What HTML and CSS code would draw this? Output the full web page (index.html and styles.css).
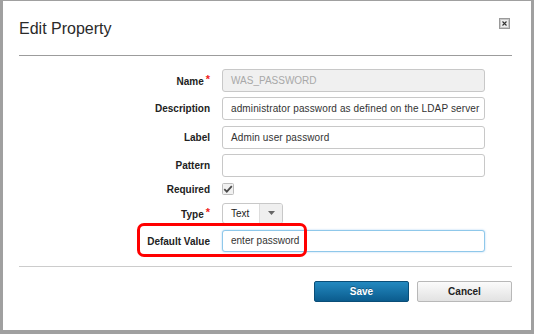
FILE: index.html
```html
<!DOCTYPE html>
<html>
<head>
<meta charset="utf-8">
<link rel="stylesheet" href="styles.css">
</head>
<body>
<div class="dialog">
  <div class="header">
    <div class="title">Edit Property</div>
    <svg class="close" width="11" height="11" viewBox="0 0 11 11">
      <rect x="0.5" y="0.5" width="10" height="10" fill="#e4e4e4" stroke="#9a9a9a"/>
      <rect x="1.5" y="1.5" width="8" height="8" fill="#eeeeee" stroke="#c8c8c8"/>
      <path d="M3.5 3.5 L7.5 7.5 M7.5 3.5 L3.5 7.5" stroke="#333" stroke-width="1.1"/>
    </svg>
  </div>
  <div class="form">
    <div class="row">
      <div class="label">Name<span class="req">*</span></div>
      <div class="field disabled">WAS_PASSWORD</div>
    </div>
    <div class="row">
      <div class="label">Description</div>
      <div class="field">administrator password as defined on the LDAP server</div>
    </div>
    <div class="row row-label">
      <div class="label">Label</div>
      <div class="field">Admin user password</div>
    </div>
    <div class="row">
      <div class="label">Pattern</div>
      <div class="field"></div>
    </div>
    <div class="row row-check">
      <div class="label">Required</div>
      <svg class="checkbox" width="12" height="12" viewBox="0 0 12 12">
        <rect x="0.5" y="0.5" width="11" height="11" rx="1" fill="#f1f1f1" stroke="#bdbdbd"/>
        <path d="M2.3 6.2 L4.8 8.6 L9.8 3.2" fill="none" stroke="#4a4a4a" stroke-width="1.8"/>
      </svg>
    </div>
    <div class="row row-type">
      <div class="label">Type<span class="req">*</span></div>
      <div class="select">
        <span class="select-text">Text</span>
        <span class="select-btn">
          <svg width="7" height="4" viewBox="0 0 7 4"><path d="M0 0 H7 L3.5 4 Z" fill="#666"/></svg>
        </span>
      </div>
    </div>
    <div class="row row-default">
      <div class="label">Default Value</div>
      <div class="field focus">enter password</div>
      <div class="highlight"></div>
    </div>
  </div>
  <div class="footer">
    <button class="btn btn-primary">Save</button>
    <button class="btn btn-secondary">Cancel</button>
  </div>
</div>
</body>
</html>
```

FILE: styles.css
```css
html, body {
  margin: 0;
  padding: 0;
  background: #ffffff;
}

.dialog {
  box-sizing: border-box;
  width: 534px;
  height: 334px;
  border-style: solid;
  border-color: #a0a0a0;
  border-width: 1px 3px 4px 3px;
  background: #ffffff;
  font-family: "Liberation Sans", Arial, sans-serif;
  color: #333333;
  display: flex;
  flex-direction: column;
}

.header {
  margin: 0 19px 0 16px;
  padding: 18px 0 17px;
  border-bottom: 1px solid #9c9c9c;
  display: flex;
  justify-content: space-between;
  align-items: flex-start;
}

.title {
  font-size: 16px;
  line-height: 19px;
  color: #2a2a2a;
}

.close {
  display: block;
  margin-top: -1px;
  margin-right: 2px;
}

.form {
  padding-top: 13px;
  display: flex;
  flex-direction: column;
  gap: 5px;
}

.row {
  display: flex;
  align-items: center;
  position: relative;
}

.label {
  width: 207px;
  margin-right: 12px;
  text-align: right;
  font-size: 10px;
  font-weight: bold;
  color: #222222;
  white-space: nowrap;
}

.req {
  color: #f0221a;
  font-size: 11px;
  margin-left: 2px;
  position: relative;
  top: -2px;
}

.field {
  box-sizing: border-box;
  width: 263px;
  height: 23px;
  border: 1px solid #c8c8c8;
  border-radius: 3px;
  padding: 0 5px 0 8px;
  font-size: 10px;
  line-height: 21px;
  letter-spacing: 0.12px;
  color: #333333;
  white-space: nowrap;
  overflow: hidden;
  background: #ffffff;
}

.field.disabled {
  background: #f0f0f0;
  color: #a8a8a8;
  letter-spacing: 0;
}

.field.focus {
  height: 22px;
  line-height: 20px;
  letter-spacing: 0;
  border-color: #8fc8ea;
  box-shadow: 0 0 2px rgba(102, 175, 233, 0.6);
}

.row-label {
  margin-top: 1px;
}

.row-check {
  margin-top: 1px;
  height: 12px;
}

.checkbox {
  display: block;
}

.row-type {
  margin-top: 3px;
}

.select {
  box-sizing: border-box;
  width: 61px;
  height: 21px;
  border: 1px solid #c8c8c8;
  border-radius: 3px;
  display: flex;
  overflow: hidden;
  background: #ffffff;
}

.select-text {
  flex: 1;
  padding-left: 8px;
  font-size: 10px;
  line-height: 19px;
  color: #222222;
}

.select-btn {
  width: 22px;
  background: #efefef;
  border-left: 1px solid #dddddd;
  display: flex;
  align-items: center;
  justify-content: center;
}

.select-btn svg {
  display: block;
  margin-top: -2px;
}

.row-default {
  margin-top: 1px;
}

.highlight {
  position: absolute;
  box-sizing: border-box;
  left: 134px;
  top: -7px;
  width: 170px;
  height: 34px;
  border: 3px solid #ff0000;
  border-radius: 7px;
}

.footer {
  margin: 14px 19px 0 16px;
  padding-top: 14px;
  border-top: 1px solid #cccccc;
  display: flex;
  justify-content: flex-end;
  gap: 8px;
}

.btn {
  box-sizing: border-box;
  width: 95px;
  height: 21px;
  border-radius: 2px;
  font-family: "Liberation Sans", Arial, sans-serif;
  font-size: 10px;
  font-weight: bold;
  padding: 0;
  line-height: 19px;
}

.btn-primary {
  color: #ffffff;
  border: 1px solid #0a4e78;
  background: linear-gradient(#2389c0, #0b5c8e);
  text-shadow: 0 -1px 0 rgba(0, 0, 0, 0.3);
}

.btn-secondary {
  color: #222222;
  border: 1px solid #b8b8b8;
  background: linear-gradient(#fbfbfb, #e2e2e2);
}
```
